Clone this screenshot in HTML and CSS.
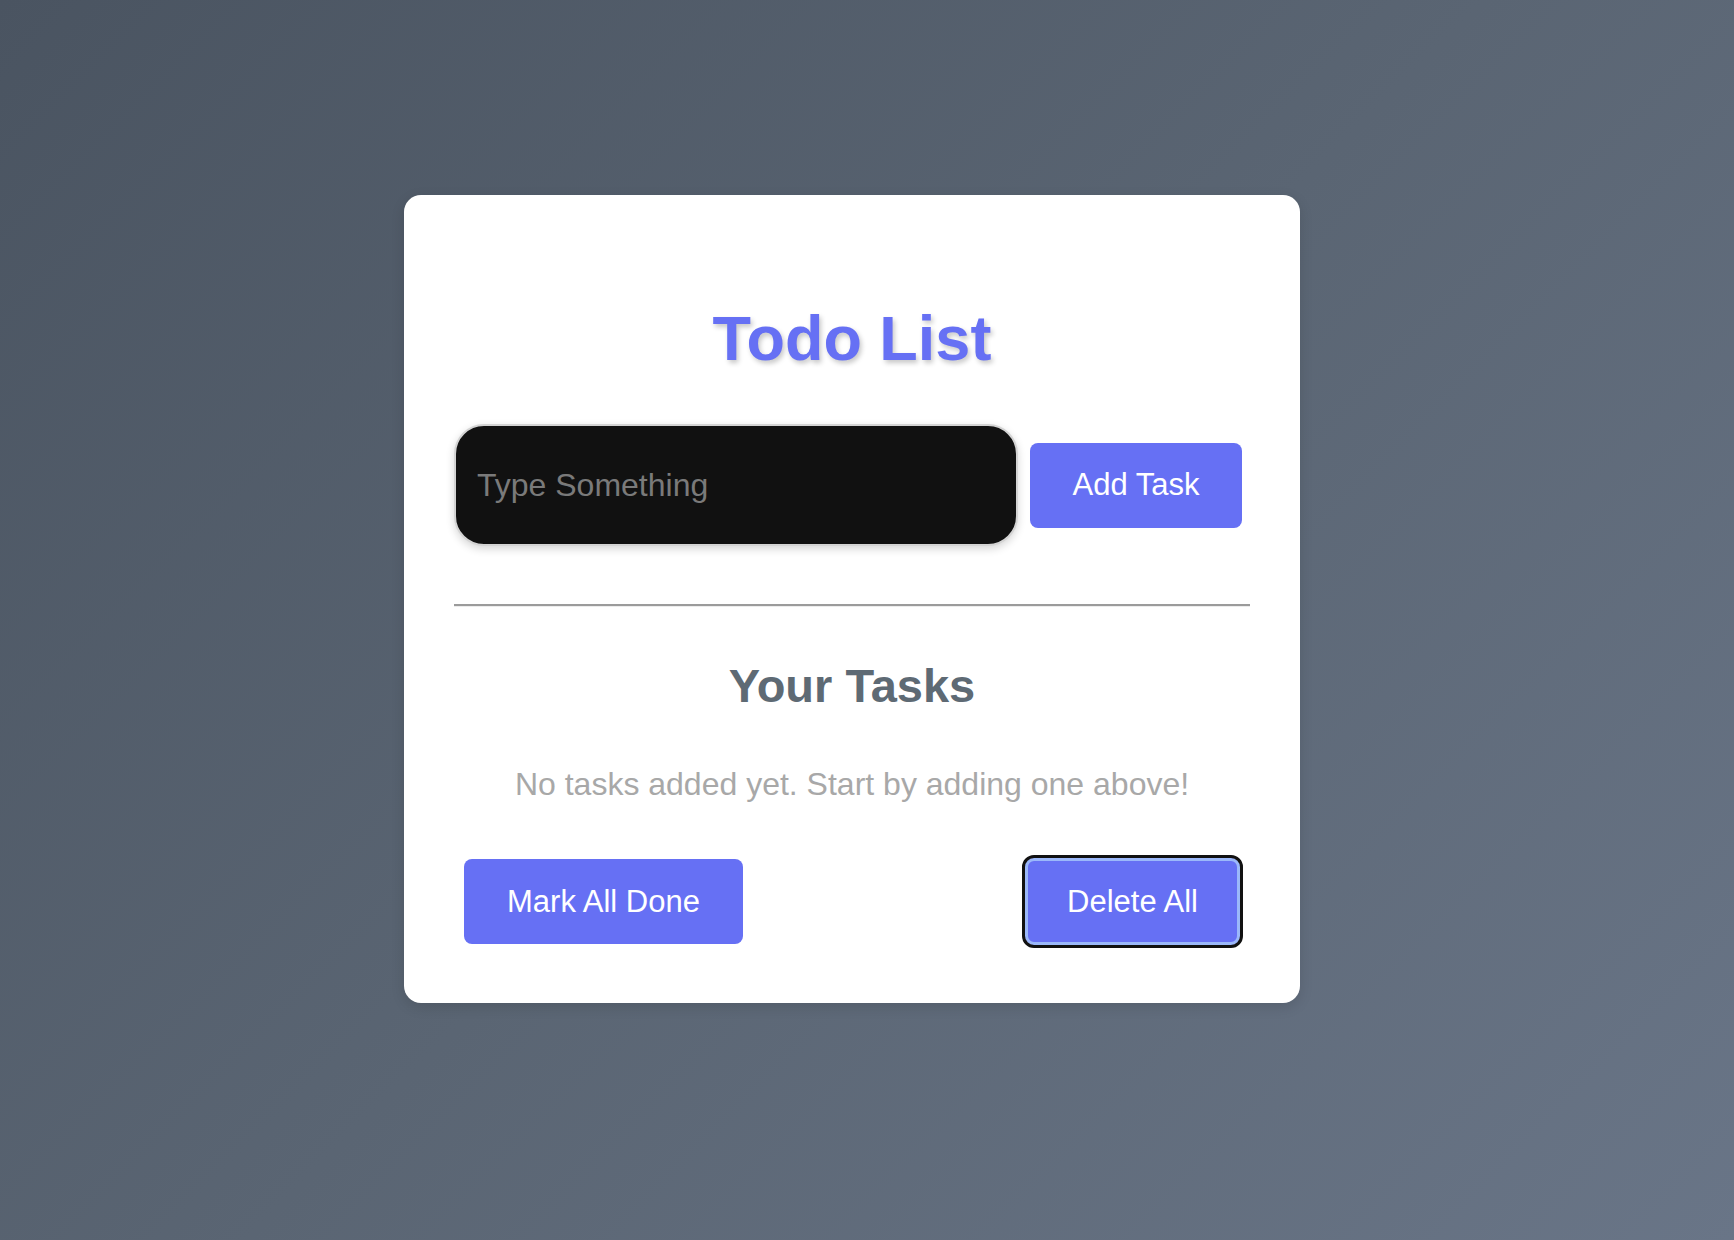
FILE: index.html
```html
<!DOCTYPE html>
<html lang="en">
<head>
<meta charset="utf-8">
<title>Todo List</title>
<link rel="stylesheet" href="styles.css">
</head>
<body>
<main class="page">
  <section class="card">
    <h1 class="title">Todo List</h1>
    <div class="entry">
      <input class="task-input" type="text" placeholder="Type Something">
      <button class="btn btn-add">Add Task</button>
    </div>
    <hr class="divider">
    <h2 class="subtitle">Your Tasks</h2>
    <p class="empty">No tasks added yet. Start by adding one above!</p>
    <div class="actions">
      <button class="btn btn-action">Mark All Done</button>
      <button class="btn btn-action is-focused">Delete All</button>
    </div>
  </section>
</main>
</body>
</html>
```
FILE: styles.css
```css
* { box-sizing: border-box; }
html, body { margin: 0; padding: 0; }
body {
  width: 1734px;
  height: 1240px;
  font-family: "Liberation Sans", Arial, Helvetica, sans-serif;
  background: linear-gradient(135deg, #4a5461 0%, #5a6573 50%, #697587 100%);
  overflow: hidden;
}
.page {
  display: flex;
  justify-content: center;
  align-items: flex-start;
  padding-top: 195px;
  padding-right: 30px;
}
.card {
  width: 896px;
  background: #ffffff;
  border-radius: 17px;
  padding: 50px 50px 58px 50px;
  box-shadow: 0 4px 14px rgba(0, 0, 0, 0.12);
  display: flex;
  flex-direction: column;
}
.title {
  margin: 57px 0 0 0;
  font-size: 63px;
  line-height: 72px;
  font-weight: 700;
  text-align: center;
  color: #6670f4;
  text-shadow: 2px 3px 5px rgba(0, 0, 0, 0.22);
}
.entry {
  margin-top: 50px;
  display: flex;
  align-items: center;
  gap: 12px;
}
.task-input {
  width: 564px;
  height: 122px;
  padding: 0 21px;
  background: #111111;
  border: 2px solid #d4d4d4;
  border-radius: 30px;
  box-shadow: 0 3px 8px rgba(0, 0, 0, 0.16);
  font-family: inherit;
  font-size: 32px;
  color: #eeeeee;
  outline: none;
}
.task-input::placeholder { color: #7a7a7a; }
.btn {
  font-family: inherit;
  color: #ffffff;
  background: #6670f4;
  border: none;
  border-radius: 8px;
  height: 85px;
  font-size: 31px;
  cursor: pointer;
}
.btn-add {
  width: 212px;
  padding: 0;
}
.divider {
  margin: 58px 0 0 0;
  height: 0;
  border: 0;
  border-top: 2px solid #9b9b9b;
  border-bottom: 1px solid #ececec;
}
.subtitle {
  margin: 52px 0 0 0;
  font-size: 47px;
  line-height: 53px;
  font-weight: 700;
  text-align: center;
  color: #5e6a74;
}
.empty {
  margin: 54px 0 0 0;
  font-size: 32px;
  line-height: 37px;
  text-align: center;
  color: #a8a8a8;
}
.actions {
  margin-top: 55px;
  display: flex;
  justify-content: space-between;
  align-items: center;
  padding: 0 10px;
}
.btn-action {
  padding: 0 43px;
}
.is-focused {
  height: 87px;
  padding: 0 42px;
  box-shadow: inset 0 0 0 3px #9bb8fa;
  outline: 3px solid #111111;
  outline-offset: 0;
  border-radius: 9px;
}
```
